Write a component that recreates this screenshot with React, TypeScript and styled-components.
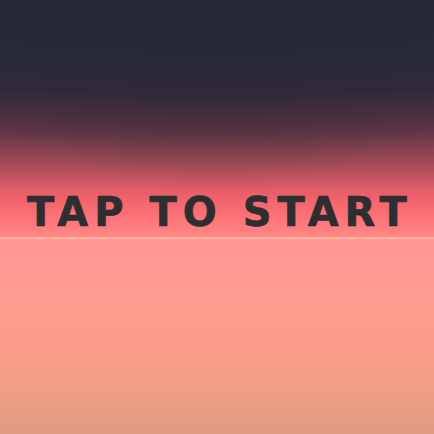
import styled, { createGlobalStyle } from "styled-components";

const GlobalStyle = createGlobalStyle`
  html, body {
    margin: 0;
    padding: 0;
    background: #232833;
  }
`;

const Screen = styled.div`
  width: 434px;
  height: 434px;
  overflow: hidden;
  display: flex;
  flex-direction: column;
  cursor: pointer;
  user-select: none;
`;

const Sky = styled.div`
  position: relative;
  height: 237px;
  display: flex;
  align-items: flex-end;
  justify-content: center;
  background: linear-gradient(
    to bottom,
    #232833 0%,
    #262a36 20%,
    #33293a 38%,
    #5e3545 55%,
    #a94d59 70%,
    #f0626b 83%,
    #ff7a7d 95%,
    #ff8a86 100%
  );

  &::before {
    content: "";
    position: absolute;
    inset: 0;
    background: radial-gradient(
      ellipse 65% 70% at 50% 10%,
      rgba(35, 40, 51, 0.45) 0%,
      rgba(35, 40, 51, 0.25) 55%,
      rgba(35, 40, 51, 0) 100%
    );
  }
`;

const Horizon = styled.div`
  height: 2px;
  background: #ffb39e;
`;

const Ground = styled.div`
  flex: 1;
  background: linear-gradient(
    to bottom,
    #ff9896 0%,
    #ff9c92 30%,
    #fb9c8a 60%,
    #eb9c84 85%,
    #dd9c82 100%
  );
`;

const Title = styled.h1`
  position: relative;
  margin: 0 0 5px 6px;
  font-family: "DejaVu Sans", "Liberation Sans", sans-serif;
  font-weight: 700;
  font-size: 40px;
  line-height: 1;
  letter-spacing: 6px;
  color: #2e2e30;
  white-space: nowrap;
  -webkit-text-stroke: 0.6px #2e2e30;
`;

export default function App() {
  return (
    <>
      <GlobalStyle />
      <Screen>
        <Sky>
          <Title>TAP TO START</Title>
        </Sky>
        <Horizon />
        <Ground />
      </Screen>
    </>
  );
}
